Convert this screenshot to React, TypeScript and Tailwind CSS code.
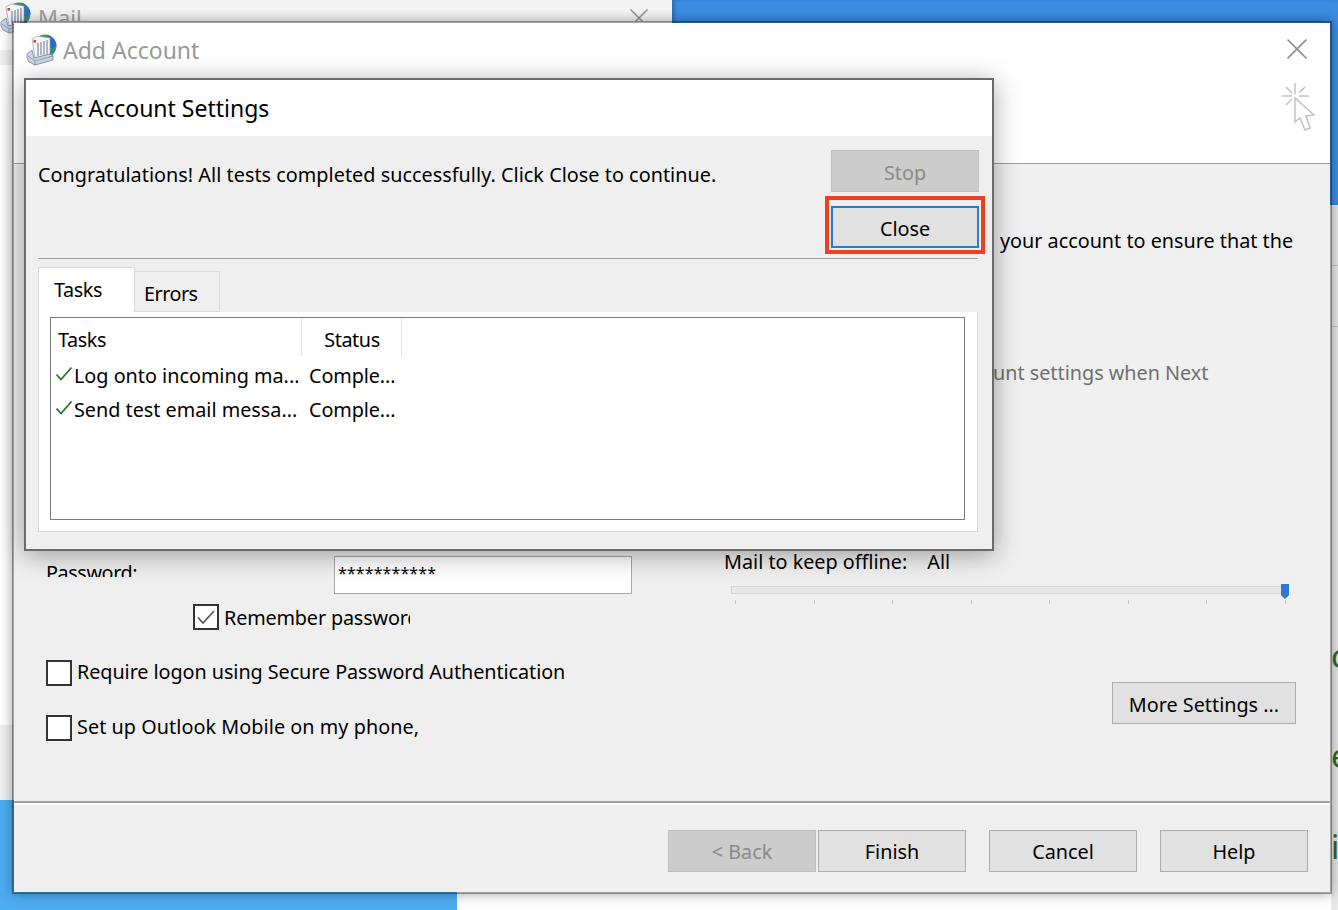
const FONT = "font-['Noto_Sans',sans-serif]";

const MailIcon = ({ className }: { className: string }) => (
  <svg viewBox="0 0 32 32" className={className}>
    <circle cx="19" cy="12" r="11.5" fill="#3f9a5c" />
    <path d="M21 1 C26 2 30 7 30.5 12 L25 15 L23 6 Z" fill="#2a6fc4" />
    <path d="M24 21 C26 20 28 18 29 16 L25 15 Z" fill="#2f7fc9" />
    <path d="M6 5 L11 2 L24 4 L24 20 L9 24 Z" fill="#f5f6f9" stroke="#8a95a6" strokeWidth="0.6" />
    <rect x="7.5" y="6" width="2.6" height="2.6" fill="#e23b26" />
    <path d="M12 9 V22 M15 8 V21 M18 7 V20.5 M21 6 V20" stroke="#66748a" strokeWidth="1" />
    <path d="M1 20 L6 16 L8 24 L24 20 L27 22 L27 26 L9 31 L3 28 L1 24 Z" fill="#cbd5e1" stroke="#75839a" strokeWidth="0.8" />
    <path d="M2 22 L9 27 L27 22 M9 27 V31" fill="none" stroke="#8090a5" strokeWidth="0.8" />
  </svg>
);

const CloseX = ({ className }: { className: string }) => (
  <svg viewBox="0 0 20 20" className={className} fill="none" stroke="#8f8f8f" strokeWidth="1.6">
    <path d="M0.5 0.5 L19.5 19.5 M19.5 0.5 L0.5 19.5" />
  </svg>
);

const ClickCursor = () => (
  <svg viewBox="0 0 34 50" className="w-[34px] h-[50px]" fill="none" stroke="#c2c2c2" strokeWidth="1.5">
    <path d="M13 0 V11 M0 13 H10 M17 13 H27 M4 4 L10 10 M23 4 L17 10 M4 22 L10 16" />
    <path d="M13 15 V39 L18 35 L23 47 L28 45 L24 33 L32 32 Z" />
  </svg>
);

const Check = () => (
  <svg viewBox="0 0 16 14" className="w-4 h-[14px] shrink-0 mt-[-5px]">
    <path d="M0.5 7.5 L5 12.5 L15.5 0.5" fill="none" stroke="#2a7326" strokeWidth="1.7" />
  </svg>
);

const Checkbox = ({ checked }: { checked?: boolean }) => (
  <div className="w-[26px] h-[26px] shrink-0 border-[2px] border-[#333333] bg-white flex items-center justify-center">
    {checked && (
      <svg viewBox="0 0 18 15" className="w-[18px] h-[15px]">
        <path d="M1 7.5 L6 13 L17 1" fill="none" stroke="#555555" strokeWidth="1.7" />
      </svg>
    )}
  </div>
);

const Btn = ({ label, disabled, w }: { label: string; disabled?: boolean; w: string }) => (
  <div
    className={`${w} h-[42px] flex items-center justify-center border ${
      disabled ? "bg-[#cccccc] border-[#bfbfbf] text-[#8a8a8a]" : "bg-[#e1e1e1] border-[#adadad] text-black"
    }`}
  >
    {label}
  </div>
);

const Ticks = () => (
  <div className="flex justify-between pl-[4px] pr-[3px] mt-[6px]">
    {[0, 1, 2, 3, 4, 5, 6, 7].map((i) => (
      <div key={i} className="w-px h-[4px] bg-[#c4c4c4]" />
    ))}
  </div>
);

const TaskRow = ({ task }: { task: string }) => (
  <div className="flex items-center h-[34px] text-black">
    <div className="w-[251px] flex items-center pl-[5px] gap-[2px]">
      <Check />
      <span className="whitespace-nowrap">{task}</span>
    </div>
    <span className="pl-[7px] whitespace-nowrap tracking-[-0.1px]">Comple...</span>
  </div>
);

export default function App() {
  return (
    <div className={`relative w-[1338px] h-[910px] overflow-hidden bg-white text-[19.8px] ${FONT}`}>
      {/* desktop */}
      <div className="absolute left-[672px] top-0 right-0 h-[205px] bg-[#3b8de2] shadow-[inset_3px_0_3px_#2f74bd]" />
      <div className="absolute left-0 top-[800px] w-[457px] h-[110px] bg-[#4dadf3]" />

      {/* Mail window behind */}
      <div className="absolute left-0 top-0 w-[672px] h-[800px] bg-white flex flex-col">
        <div className="h-[21px] bg-[#f4f4f4] flex items-start pl-[38px] text-[22px] leading-[34px] text-[#a0a0a0] relative overflow-hidden">
          Mail
          <CloseX className="absolute left-[630px] top-[9px] w-[18px] h-[18px]" />
        </div>
        <div className="h-[29px]" />
        <div className="h-[15px] bg-[#efefef]" />
        <div className="flex-1" />
        <div className="h-[75px] bg-[#efefef]" />
      </div>
      <MailIcon className="absolute left-0 top-[2px] w-[32px] h-[32px]" />

      {/* window behind on the right */}
      <div className="absolute left-[1331px] top-[205px] w-[7px] h-[705px] bg-[#e8e8e8] text-[32px] text-[#2c6a26]">
        <div className="absolute left-0 right-0 top-[60px] border-t border-[#c4c4c4]" />
        <div className="absolute left-0 right-0 top-[121px] border-t border-[#c4c4c4]" />
        <span className="absolute left-0 top-[435px] leading-none">c</span>
        <span className="absolute left-0 top-[535px] leading-none">e</span>
        <span className="absolute left-0 top-[626px] leading-none">i</span>
      </div>

      {/* Add Account */}
      <div className="absolute left-[12px] top-[21px] w-[1320px] h-[873px] border-2 border-black/35 bg-[#efefef] bg-clip-padding flex flex-col shadow-[0_0_12px_rgba(0,0,0,0.35)]">
        <div className="h-[141px] shrink-0 bg-white border-b border-[#a0a0a0] flex items-start justify-between relative">
          <div className="flex items-center pl-[12px] pt-[10px] gap-[5px]">
            <MailIcon className="w-[32px] h-[32px]" />
            <span className="text-[23px] text-[#9a9a9a]">Add Account</span>
          </div>
          <div className="flex flex-col items-end pr-[14px] pt-[16px] gap-[24px]">
            <CloseX className="w-[20px] h-[20px] mr-[9px]" />
            <ClickCursor />
          </div>
        </div>

        <div className="flex-1 relative text-black">
          <p className="absolute left-[986px] top-[62px] whitespace-nowrap">your account to ensure that the</p>
          <p className="absolute left-[979px] top-[194px] whitespace-nowrap text-[#6f6f6f]">unt settings when Next</p>

          <div className="absolute left-[32px] top-[394px] h-[19px] overflow-hidden leading-[29px] tracking-[-0.4px]">Password:</div>
          <div className="absolute left-[320px] top-[392px] w-[298px] h-[38px] bg-white border border-[#a9a9a9] pl-[3px] text-[16px] leading-[32px] tracking-[0.1px]">
            ***********
          </div>
          <div className="absolute left-[179px] top-[440px] h-[26px] flex items-center gap-[5px]">
            <Checkbox checked />
            <span className="w-[186px] overflow-hidden whitespace-nowrap pt-[2px] tracking-[-0.15px]">Remember password</span>
          </div>
          <div className="absolute left-[32px] top-[496px] flex flex-col gap-[29px]">
            <div className="h-[26px] flex items-center gap-[5px]">
              <Checkbox />
              <span className="whitespace-nowrap pb-[2px] tracking-[-0.06px]">Require logon using Secure Password Authentication</span>
            </div>
            <div className="h-[26px] flex items-center gap-[5px]">
              <Checkbox />
              <span className="whitespace-nowrap pb-[2px] tracking-[0.06px]">Set up Outlook Mobile on my phone,</span>
            </div>
          </div>

          <div className="absolute left-[710px] top-[383px] flex gap-[20px] whitespace-nowrap">
            <span>Mail to keep offline:</span>
            <span>All</span>
          </div>
          <div className="absolute left-[717px] top-[422px] w-[558px]">
            <div className="relative h-[8px] bg-[#e6e7e8] border border-[#d6d6d6]">
              <div className="absolute right-[-1px] top-[-3px] w-[8px] h-[15px] bg-[#3176d0] [clip-path:polygon(0_0,100%_0,100%_75%,50%_100%,0_75%)]" />
            </div>
            <Ticks />
          </div>

          <div className="absolute right-[34px] top-[518px]">
            <Btn label="More Settings ..." w="w-[184px] pt-[3px]" />
          </div>

          <div className="absolute left-0 right-0 top-[637px] border-t-2 border-[#a0a0a0] border-b-2 border-b-white" />

          <div className="absolute right-[22px] top-[666px] flex">
            <Btn label="< Back" disabled w="w-[148px] pt-[1px]" />
            <Btn label="Finish" w="w-[148px] ml-[2px] pt-[1px]" />
            <Btn label="Cancel" w="w-[148px] ml-[23px] pt-[1px]" />
            <Btn label="Help" w="w-[148px] ml-[23px] pt-[1px]" />
          </div>
        </div>
      </div>

      {/* Test Account Settings */}
      <div className="absolute left-[24px] top-[78px] w-[970px] h-[473px] border-2 border-[#6b6b6b] bg-[#efefef] flex flex-col shadow-[0_4px_24px_rgba(0,0,0,0.35)]">
        <div className="h-[56px] shrink-0 bg-white flex items-center pl-[13px] text-[23px] text-black">
          Test Account Settings
        </div>
        <div className="flex-1 flex flex-col px-[12px] text-black">
          <div className="flex justify-between h-[123px] shrink-0 border-b border-[#a0a0a0] mr-[2px]">
            <p className="pt-[24px] whitespace-nowrap tracking-[0.04px]">
              Congratulations! All tests completed successfully. Click Close to continue.
            </p>
            <div className="flex flex-col items-end pt-[14px] gap-[14px] mr-[-1px]">
              <Btn label="Stop" disabled w="w-[148px] pt-[3px]" />
              <div className="relative w-[148px] h-[42px] bg-[#e1e1e1] border-2 border-[#2f78d0] flex items-center justify-center pt-[3px]">
                Close
                <div className="absolute left-[-8px] top-[-12px] w-[160px] h-[58px] border-[4px] border-[#ee3f22]" />
              </div>
            </div>
          </div>
          <div className="flex h-[53px] shrink-0 items-end">
            <div className="w-[97px] h-[45px] bg-white border border-b-0 border-[#d9d9d9] pl-[15px] leading-[44px] tracking-[-0.4px]">Tasks</div>
            <div className="w-[85px] h-[41px] bg-[#efefef] border border-l-0 border-[#d9d9d9] pl-[9px] leading-[44px] tracking-[-0.5px]">Errors</div>
          </div>
          <div className="h-[220px] w-[940px] shrink-0 bg-white border border-t-0 border-[#d9d9d9] pl-[11px] pr-[12px] pt-[5px]">
            <div className="h-[203px] border border-[#7a7a7a]">
              <div className="flex h-[38px] items-center mb-[3px]">
                <div className="w-[251px] h-full border-r border-[#e4e4e4] pl-[7px] leading-[44px] tracking-[-0.4px]">Tasks</div>
                <div className="w-[100px] h-full border-r border-[#e4e4e4] text-center leading-[44px] tracking-[-0.4px] pl-[1px]">Status</div>
              </div>
              <TaskRow task="Log onto incoming ma..." />
              <TaskRow task="Send test email messa..." />
            </div>
          </div>
        </div>
      </div>
    </div>
  );
}
